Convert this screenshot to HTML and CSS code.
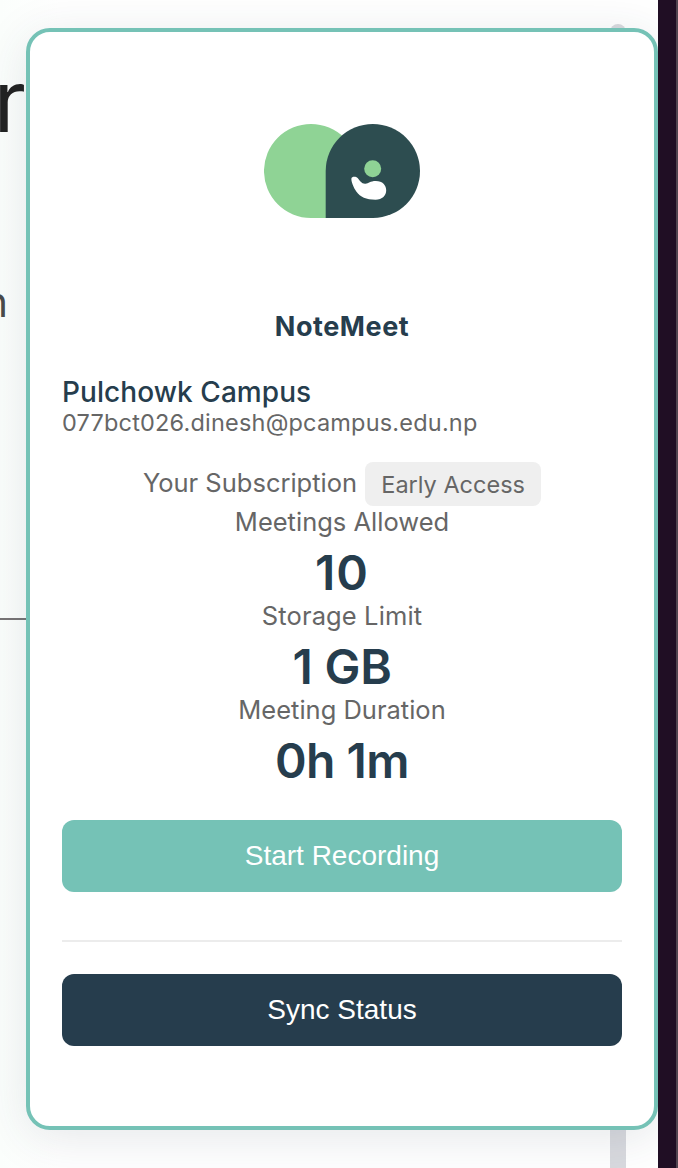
FILE: index.html
```html
<!DOCTYPE html>
<html lang="en">
<head>
<meta charset="utf-8">
<title>NoteMeet</title>
<link rel="stylesheet" href="styles.css">
</head>
<body>
<div class="screen">
  <div class="backdrop">
    <span class="backdrop-title">r</span>
    <span class="backdrop-text">n</span>
    <div class="backdrop-rule"></div>
    <div class="scroll-thumb"></div>
  </div>
  <div class="desktop-edge"></div>
  <main class="card">
    <svg class="logo" viewBox="0 0 156 94" aria-hidden="true">
      <path d="M47 0a47 47 0 1 0 0 94h47V47A47 47 0 0 0 47 0Z" fill="#8fd395"/>
      <path d="M61.700 94V47A47.150 47 0 1 1 109 94Z" fill="#2d4d50"/>
      <circle cx="108.700" cy="44.800" r="8.500" fill="#8fd395"/>
      <path d="M87.400 54.600C87.600 52.400 92 52.300 93.600 54.100C96 56.800 97.500 60.100 101.500 59.800C104.700 59.600 106 57 111.800 57C118.600 57 122.200 61.300 122.200 66.300C122.200 71.500 118.400 75.700 111.500 75.700C102 75.700 96.500 73.200 92.300 67.500C89.400 63.600 87.100 57.500 87.400 54.600Z" fill="#fff"/>
    </svg>
    <h1 class="brand">NoteMeet</h1>
    <div class="user">
      <div class="user-name">Pulchowk Campus</div>
      <div class="user-email">077bct026.dinesh@pcampus.edu.np</div>
    </div>
    <div class="plan">
      <span class="plan-label">Your Subscription</span>
      <span class="pill">Early Access</span>
    </div>
    <div class="stat"><div class="label">Meetings Allowed</div><div class="value value-count">10</div></div>
    <div class="stat"><div class="label label-storage">Storage Limit</div><div class="value">1 GB</div></div>
    <div class="stat"><div class="label">Meeting Duration</div><div class="value value-time">0h 1m</div></div>
    <button class="button button-record">Start Recording</button>
    <hr class="divider">
    <button class="button button-sync">Sync Status</button>
  </main>
</div>
</body>
</html>
```
FILE: styles.css
```css
* { box-sizing: border-box; margin: 0; padding: 0; }
body { background: #fdfefe; overflow: hidden; }
.screen {
  position: relative;
  width: 678px;
  height: 1168px;
  padding: 28px 20px 38px 26px;
  overflow: hidden;
  font-family: Inter, "Liberation Sans", sans-serif;
  color: #666;
}
.backdrop {
  position: absolute;
  inset: 0 20px 0 0;
  overflow: hidden;
  background: linear-gradient(90deg, #fbfefc, #fff 60px);
}
.backdrop-title {
  position: absolute;
  right: 632px;
  top: 53px;
  font: 400 86px/96px Inter, sans-serif;
  color: #222;
}
.backdrop-text {
  position: absolute;
  right: 650px;
  top: 277px;
  font: 400 41px/50px Inter, sans-serif;
  color: #4b4b4b;
}
.backdrop-rule {
  position: absolute;
  left: 0;
  top: 618px;
  width: 30px;
  height: 2px;
  background: #777475;
}
.scroll-thumb {
  position: absolute;
  right: 32px;
  top: 24px;
  width: 16px;
  height: 1200px;
  border-radius: 8px;
  background: #d9dadf;
}
.desktop-edge {
  position: absolute;
  z-index: 2;
  right: 0;
  top: 0;
  width: 20px;
  height: 100%;
  background: #200e24;
  border-right: 2px solid #514450;
}
.card {
  position: relative;
  display: flex;
  flex-direction: column;
  height: 1102px;
  padding: 92px 32px 0;
  background: #fff;
  border: 4px solid #75c2b6;
  border-radius: 24px;
  box-shadow: 0 8px 48px rgba(38, 60, 76, .12);
}
.logo { width: 156px; height: 94px; align-self: center; }
.brand {
  margin-top: 91px;
  font-size: 27px;
  line-height: 36px;
  font-weight: 700;
  letter-spacing: .55px;
  text-align: center;
  color: #263d4d;
}
.user { margin-top: 29px; }
.user-name { font-size: 28px; line-height: 36px; font-weight: 500; letter-spacing: .07px; color: #263d4d; }
.user-email { font-size: 23.5px; line-height: 26px; letter-spacing: .19px; }
.plan {
  display: flex;
  justify-content: center;
  align-items: center;
  gap: 8px;
  margin-top: 26px;
  height: 44px;
  font-size: 25.5px;
}
.plan-label { line-height: 32px; padding-bottom: 2px; }
.pill {
  width: 176px;
  height: 44px;
  border-radius: 8px;
  background: #efefef;
  font-size: 23.5px;
  line-height: 46px;
  text-align: center;
}
.label { font-size: 25.5px; line-height: 32px; text-align: center; }
.label-storage { letter-spacing: .12px; }
.value {
  margin-top: 8px;
  font-size: 48px;
  line-height: 54px;
  font-weight: 600;
  letter-spacing: -.2px;
  text-align: center;
  color: #263d4d;
}
.value-count { letter-spacing: .9px; }
.value-time { letter-spacing: -.5px; }
.button {
  flex: none;
  height: 72px;
  border: 0;
  border-radius: 12px;
  color: #fff;
  font: 400 28px/72px "Liberation Sans", Arial, sans-serif;
}
.button-record { margin-top: 32px; background: #75c2b6; }
.divider { height: 2px; margin: 48px 0 32px; border: 0; background: #ececec; }
.button-sync { background: #263d4d; }
```
